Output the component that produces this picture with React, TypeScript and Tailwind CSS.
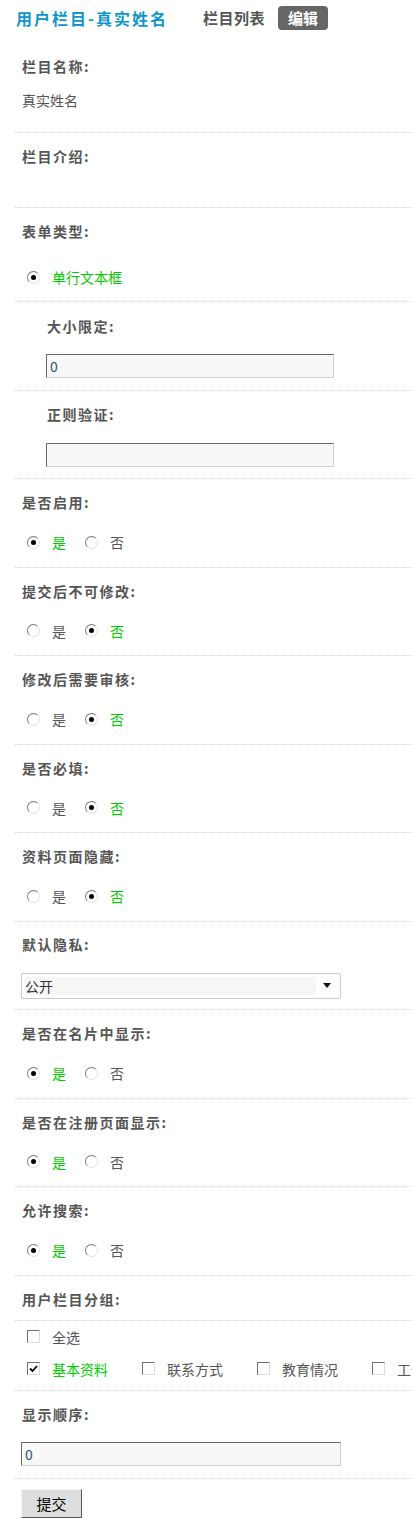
import React from "react"

const font = { fontFamily: '"Noto Sans CJK SC", "Noto Sans", sans-serif' }

function Radio({ checked }: { checked?: boolean }) {
  return (
    <span className="flex items-center justify-center w-[13px] h-[13px] rounded-full border border-t-[#7a7a7a] border-l-[#7a7a7a] border-b-[#e2e2e2] border-r-[#e2e2e2] bg-white shrink-0">
      {checked && <span className="w-[5px] h-[5px] rounded-full bg-black" />}
    </span>
  )
}

function Checkbox({ checked }: { checked?: boolean }) {
  return (
    <span className="flex items-center justify-center w-[13px] h-[13px] border border-t-[#707070] border-l-[#707070] border-b-[#dcdcdc] border-r-[#dcdcdc] bg-white shrink-0">
      {checked && (
        <svg width="9" height="9" viewBox="0 0 9 9">
          <path d="M1 4.5 L3.5 7 L8 2" stroke="#000" strokeWidth="1.8" fill="none" />
        </svg>
      )}
    </span>
  )
}

function Label({ children }: { children: React.ReactNode }) {
  return <div className="h-[20px] leading-[20px] text-[14px] font-bold tracking-[1.5px] text-[#555]">{children}</div>
}

function YesNo({ yes }: { yes: boolean }) {
  return (
    <div className="flex items-center h-[20px] pl-[5px] text-[14px] leading-[20px]">
      <Radio checked={yes} />
      <span className={"ml-[12px] w-[33px] " + (yes ? "text-[#00cc00]" : "text-[#555]")}>是</span>
      <Radio checked={!yes} />
      <span className={"ml-[12px] " + (!yes ? "text-[#00cc00]" : "text-[#555]")}>否</span>
    </div>
  )
}

function Section({ children, first, className }: { children: React.ReactNode; first?: boolean; className?: string }) {
  return (
    <div className={"ml-[15px] pl-[7px] " + (first ? "" : "border-t border-dotted border-[#cdd8e2] ") + (className ?? "")}>
      {children}
    </div>
  )
}

function RadioSection({ label, yes }: { label: string; yes: boolean }) {
  return (
    <Section className="h-[88.5px] pt-[13px]">
      <Label>{label}:</Label>
      <div className="mt-[20px]">
        <YesNo yes={yes} />
      </div>
    </Section>
  )
}

function TextInput({ value, width }: { value: string; width: string }) {
  return (
    <div
      className={
        "h-[24px] bg-[#f8f8f8] border border-t-[#6a6a6a] border-l-[#6a6a6a] border-b-[#cfcfcf] border-r-[#cfcfcf] pl-[3px] text-[14px] leading-[22px] text-[#34507a] " +
        width
      }
    >
      {value}
    </div>
  )
}

export default function App() {
  const groups = [
    { name: "基本资料", checked: true },
    { name: "联系方式", checked: false },
    { name: "教育情况", checked: false },
    { name: "工作情况", checked: false },
  ]

  return (
    <div className="w-[412px] min-h-[1518px] bg-white overflow-hidden" style={font}>
      {/* Header */}
      <div className="h-[43px] pt-[6px] pl-[16px] flex items-start">
        <div className="flex items-center h-[24px]">
          <span className="text-[16px] font-bold tracking-[2px] text-[#0e96cc]">用户栏目-真实姓名</span>
          <span className="ml-[35px] text-[15px] font-bold text-[#555] tracking-[0.5px]">栏目列表</span>
          <span className="ml-[13px] h-[24px] w-[50px] flex items-center justify-center rounded-[4px] bg-[#666] text-white text-[15px] font-bold">
            编辑
          </span>
        </div>
      </div>

      {/* 栏目名称 */}
      <Section first className="h-[88.5px] pt-[13px]">
        <Label>栏目名称:</Label>
        <div className="mt-[14px] h-[20px] leading-[20px] text-[14px] text-[#555]">真实姓名</div>
      </Section>

      {/* 栏目介绍 */}
      <Section className="h-[75.5px] pt-[13px]">
        <Label>栏目介绍:</Label>
      </Section>

      {/* 表单类型 */}
      <Section className="h-[94px] pt-[13px]">
        <Label>表单类型:</Label>
        <div className="mt-[26px] flex items-center h-[20px] pl-[5px] text-[14px] leading-[20px]">
          <Radio checked />
          <span className="ml-[12px] text-[#00cc00]">单行文本框</span>
        </div>
      </Section>

      {/* 大小限定 */}
      <Section className="h-[88.5px] pt-[14px]">
        <div className="pl-[25px]">
          <Label>大小限定:</Label>
          <div className="mt-[18px] -ml-[1px]">
            <TextInput value="0" width="w-[288px]" />
          </div>
        </div>
      </Section>

      {/* 正则验证 */}
      <Section className="h-[88.5px] pt-[13px]">
        <div className="pl-[25px]">
          <Label>正则验证:</Label>
          <div className="mt-[19px] -ml-[1px]">
            <TextInput value="" width="w-[288px]" />
          </div>
        </div>
      </Section>

      <RadioSection label="是否启用" yes={true} />
      <RadioSection label="提交后不可修改" yes={false} />
      <RadioSection label="修改后需要审核" yes={false} />
      <RadioSection label="是否必填" yes={false} />
      <RadioSection label="资料页面隐藏" yes={false} />

      {/* 默认隐私 */}
      <Section className="h-[88.5px] pt-[12px]">
        <Label>默认隐私:</Label>
        <div className="mt-[19px] -ml-[1px] w-[320px] h-[26px] rounded-[2px] border border-[#c5cbd2] bg-white flex items-center pl-[3px] pr-[9px]">
          <div className="w-[291px] h-[18px] bg-[#f6f6f6] text-[14px] leading-[18px] text-[#333]">公开</div>
          <svg className="ml-auto" width="8" height="5" viewBox="0 0 8 5">
            <path d="M0 0 H8 L4 5 Z" fill="#111" />
          </svg>
        </div>
      </Section>

      <RadioSection label="是否在名片中显示" yes={true} />
      <RadioSection label="是否在注册页面显示" yes={true} />
      <RadioSection label="允许搜索" yes={true} />

      {/* 用户栏目分组 */}
      <Section className="h-[45px] pt-[13px]">
        <Label>用户栏目分组:</Label>
      </Section>

      <Section className="h-[70px] pt-[6px]">
        <div className="flex items-center h-[20px] pl-[5px] text-[14px] leading-[20px] text-[#555]">
          <Checkbox />
          <span className="ml-[12px]">全选</span>
        </div>
        <div className="mt-[12px] flex items-center h-[20px] pl-[5px] text-[14px] leading-[20px] whitespace-nowrap">
          {groups.map((g) => (
            <div key={g.name} className="flex items-center w-[115px] shrink-0">
              <Checkbox checked={g.checked} />
              <span className={"ml-[12px] " + (g.checked ? "text-[#00cc00]" : "text-[#555]")}>{g.name}</span>
            </div>
          ))}
        </div>
      </Section>

      {/* 显示顺序 */}
      <Section className="h-[88px] pt-[13px]">
        <Label>显示顺序:</Label>
        <div className="mt-[18px] -ml-[1px]">
          <TextInput value="0" width="w-[320px]" />
        </div>
      </Section>

      {/* 提交 */}
      <Section className="pt-[10px] pb-[2px]">
        <button className="-ml-[1px] w-[61px] h-[29px] bg-[#dedede] border border-t-[#f4f4f4] border-l-[#f4f4f4] border-b-[#555] border-r-[#555] text-[15px] text-black leading-[27px]">
          提交
        </button>
      </Section>
    </div>
  )
}
